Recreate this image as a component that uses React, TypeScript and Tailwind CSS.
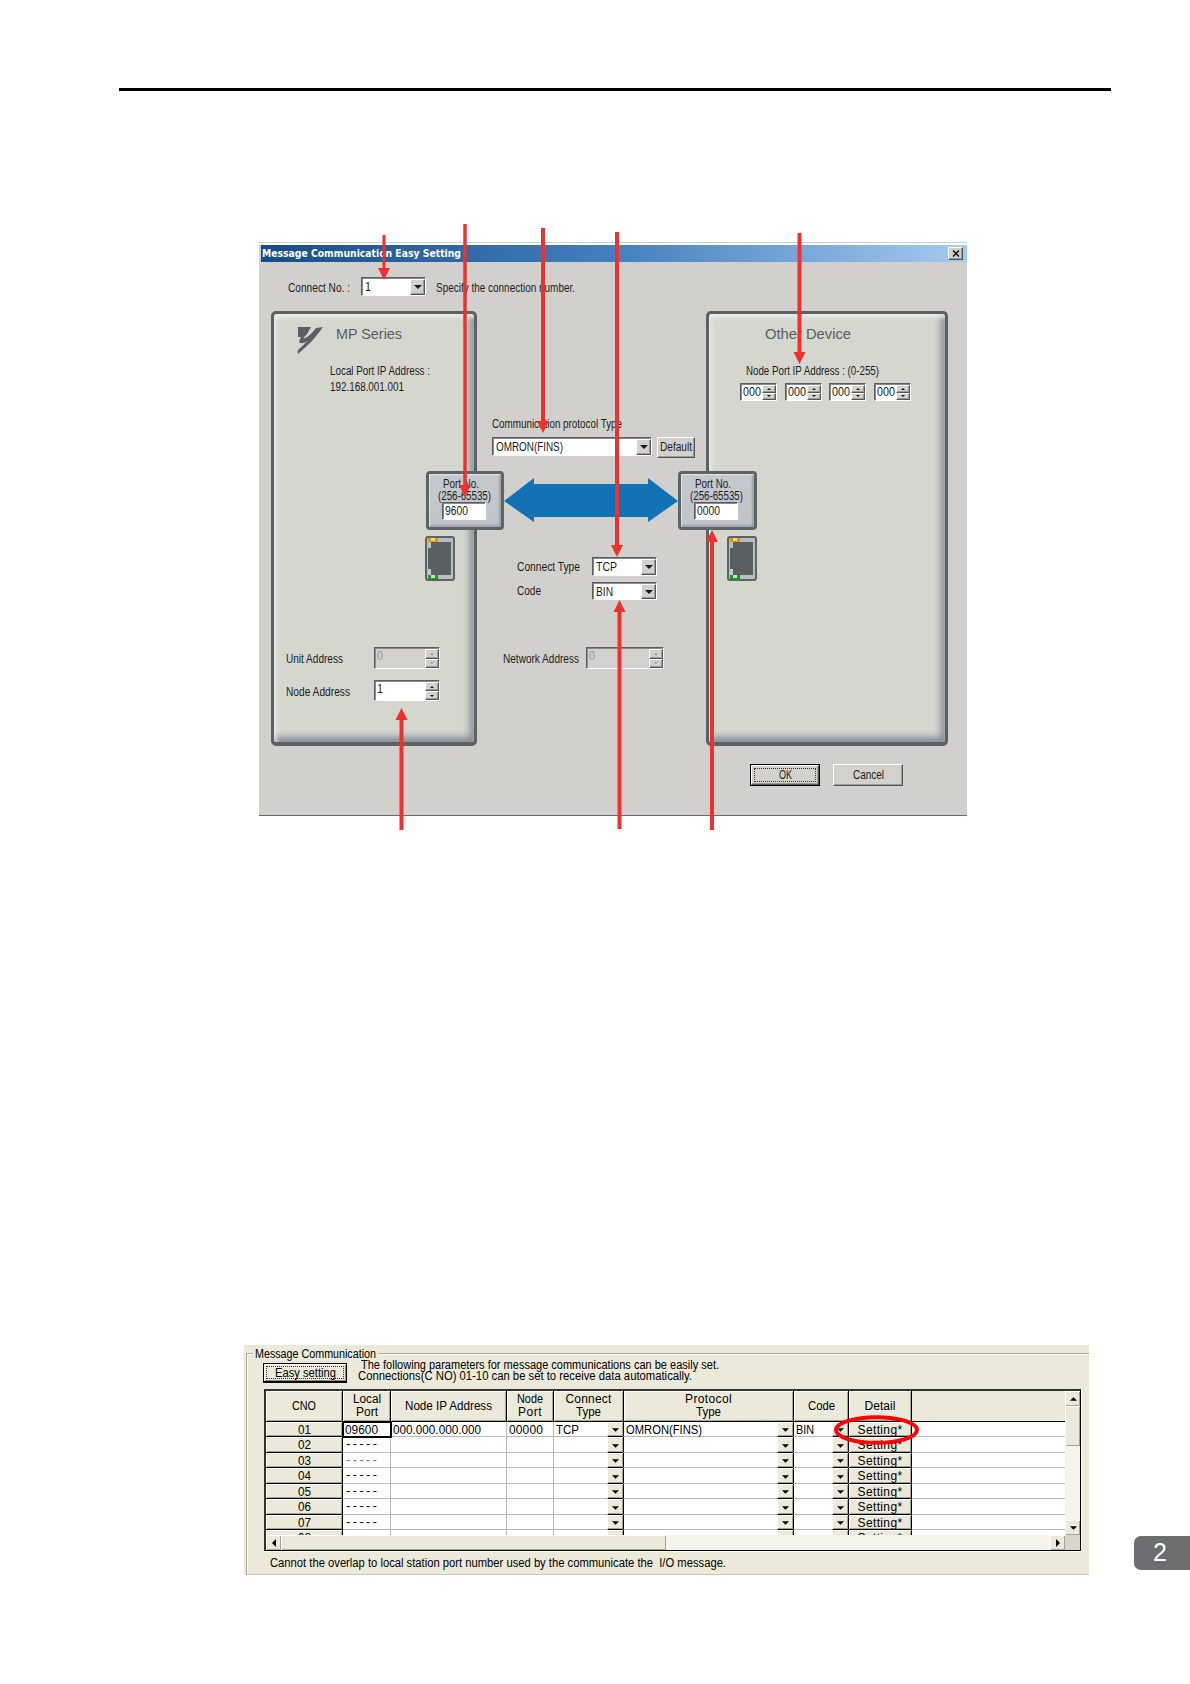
import React, { useLayoutEffect, useRef } from 'react';
import clsx from 'clsx';

const SUNKEN = 'border border-t-[#5c5c60] border-l-[#5c5c60] border-b-white border-r-white shadow-[inset_1px_1px_0_#8a8a8c]';
const RAISED = 'bg-[#d3d1cc] border border-t-white border-l-white border-b-[#55555a] border-r-[#55555a] shadow-[inset_-1px_-1px_0_#9b9b98]';
const XP_RAISED = 'bg-[#ebe9d9] border-t border-l border-t-white border-l-white shadow-[inset_-1px_-1px_0_#a5a394]';

// Makes the text fill the width given by className: wide text is condensed, narrow text is spaced out
function Fit({ children, className }: { children: string; className?: string }) {
  const ref = useRef<HTMLDivElement>(null);

  useLayoutEffect(() => {
    const box = ref.current;
    const text = box?.firstElementChild as HTMLElement | null;
    if (!box || !text) return;
    text.style.letterSpacing = '0px';
    text.style.transform = 'none';
    const width = text.getBoundingClientRect().width;
    if (width > box.clientWidth) {
      text.style.transform = `scaleX(${box.clientWidth / width})`;
    } else {
      text.style.letterSpacing = `${(box.clientWidth - width) / children.length}px`;
    }
  }, [children]);

  return (
    <div ref={ref} className={clsx('shrink-0 whitespace-pre', className)}>
      <span className="inline-block origin-left">{children}</span>
    </div>
  );
}

function Caret({ up, className }: { up?: boolean; className?: string }) {
  return (
    <svg viewBox="0 0 8 4" className={clsx('block', className)} fill="currentColor">
      <path d={up ? 'M0 4L4 0L8 4Z' : 'M0 0H8L4 4Z'} />
    </svg>
  );
}

function Combo({ value, className, textClass }: { value: string; className: string; textClass: string }) {
  return (
    <div className={clsx('flex shrink-0 justify-between bg-white pl-[3px] pt-px', SUNKEN, className)}>
      <Fit className={clsx('self-center leading-[14px]', textClass)}>{value}</Fit>
      <div className={clsx('flex w-[15px] items-center justify-center', RAISED)}>
        <Caret className="h-[4px] w-[8px]" />
      </div>
    </div>
  );
}

function Spinner({ value, className, textClass, disabled }: { value: string; className: string; textClass: string; disabled?: boolean }) {
  return (
    <div className={clsx('flex shrink-0 justify-between pl-[2px] pt-px', SUNKEN, disabled ? 'bg-[#d2d1ce] text-[#98989a]' : 'bg-white', className)}>
      <Fit className={clsx('leading-[15px]', textClass)}>{value}</Fit>
      <div className="flex w-[14px] flex-col">
        <div className={clsx('flex flex-1 items-center justify-center', RAISED)}>
          <Caret up className="h-[2px] w-[4px]" />
        </div>
        <div className={clsx('flex flex-1 items-center justify-center', RAISED)}>
          <Caret className="h-[2px] w-[4px]" />
        </div>
      </div>
    </div>
  );
}

function PortBox({ value, className }: { value: string; className: string }) {
  return (
    <div className={clsx('absolute h-[59px] rounded-[4px] border-[3px] border-[#5d6468] bg-linear-to-b from-[#c6c9cc] to-[#bfc4ca] shadow-[inset_1px_1px_1px_#e2e4e6,inset_-2px_-2px_2px_#9ba2ac]', className)}>
      <Fit className="ml-[14px] mt-[3px] h-[12px] w-[36px] text-[12px] leading-[14px]">Port No.</Fit>
      <Fit className="ml-[9px] h-[13px] w-[53px] text-[12px] leading-[14px]">(256-65535)</Fit>
      <div className={clsx('ml-[13px] h-[18px] w-[44px] bg-white pl-[2px]', SUNKEN)}>
        <Fit className="w-[23px] text-[12px] leading-[17px]">{value}</Fit>
      </div>
    </div>
  );
}

function Jack({ className }: { className: string }) {
  return (
    <svg viewBox="0 0 30 45" className={clsx('absolute h-[45px] w-[30px]', className)}>
      <rect x="1" y="1" width="28" height="43" rx="2" fill="#b9bdc0" stroke="#5d6468" strokeWidth="2" />
      <path d="M6 6H26V39H3V12H6Z" fill="#596062" />
      <rect x="3" y="33" width="3" height="6" fill="#c6c9cb" />
      <rect x="3" y="2" width="10" height="4" fill="#e2921f" />
      <rect x="6" y="2" width="4" height="3" fill="#ffe071" />
      <rect x="3" y="39" width="10" height="4" fill="#1e9139" />
      <rect x="6" y="39" width="4" height="3" fill="#a8ff9c" />
    </svg>
  );
}

const PANEL = 'relative h-[435px] shrink-0 rounded-[5px] border-[3px] border-b-[4px] border-[#5b6265] bg-[#d5d7cf] shadow-[inset_2px_3px_5px_#eceeea,inset_-5px_-6px_7px_-1px_#828b92]';

function EasySettingDialog() {
  return (
    <div className="relative ml-[259px] h-[574px] w-[708px] border-t border-b border-t-[#c9cdd1] border-b-[#6a6a6c] bg-[#d2d0cc] pt-[2px] text-[12px] text-[#1b1b1d]">
      <div className="absolute inset-x-0 top-0 h-[2px] bg-white" />
      <div className="ml-[2px] flex h-[17px] items-center justify-between bg-linear-to-r from-[#164d86] via-[#457fbd] to-[#a5cbef] pl-px pr-[4px]">
        <Fit className="w-[199px] font-[DejaVu_Sans,sans-serif] text-[10.5px] font-bold leading-[17px] text-white">Message Communication Easy Setting</Fit>
        <div className={clsx('flex h-[13px] w-[15px] items-center justify-center', RAISED)}>
          <svg viewBox="0 0 8 7" className="h-[7px] w-[8px]" stroke="#111" strokeWidth="1.5">
            <path d="M1 0.5L7 6.5M7 0.5L1 6.5" />
          </svg>
        </div>
      </div>

      <div className="ml-[29px] mt-[15px] flex h-[19px] items-center">
        <Fit className="w-[62px] pt-[2px]">Connect No. :</Fit>
        <Combo value="1" className="ml-[11px] h-[19px] w-[65px]" textClass="w-[6px]" />
        <Fit className="ml-[10px] w-[139px] pt-[2px]">Specify the connection number.</Fit>
      </div>

      <div className="ml-[12px] mt-[15px] flex">
        <div className={clsx('w-[206px]', PANEL)}>
          <div className="ml-[23px] mt-[13px] flex h-[27px]">
            <svg viewBox="0 0 26 27" className="h-[27px] w-[26px]" fill="#5a6065">
              <path d="M1 0H14L10 7L8 11Q13 9 19 1L26 0Q21 7 15 14Q9 20 1 27Q0 25 1 23Q7 18 10 14Q6 17 3 16Q1 15 4 10H1Z" />
              <path d="M16 2Q12 7 7 11" fill="none" stroke="#d5d7cf" strokeWidth="1.2" />
            </svg>
            <Fit className="ml-[13px] w-[66px] text-[15.5px] leading-[13px] text-[#595d60]">MP Series</Fit>
          </div>
          <Fit className="ml-[56px] mt-[10px] w-[100px] leading-[14px]">Local Port IP Address :</Fit>
          <Fit className="ml-[56px] mt-[2px] w-[74px] leading-[14px]">192.168.001.001</Fit>
          <div className="ml-[12px] mt-[253px] flex h-[22px] items-center">
            <Fit className="w-[57px] pt-px">Unit Address</Fit>
            <Spinner disabled value="0" className="ml-[31px] h-[22px] w-[66px]" textClass="w-[6px]" />
          </div>
          <div className="ml-[12px] mt-[11px] flex h-[21px] items-center">
            <Fit className="w-[64px] pt-[2px]">Node Address</Fit>
            <Spinner value="1" className="ml-[24px] h-[21px] w-[66px]" textClass="w-[6px]" />
          </div>
          <PortBox value="9600" className="left-[152px] top-[157px] w-[78px]" />
          <Jack className="left-[151px] top-[222px]" />
        </div>

        <div className="w-[229px] shrink-0">
          <Fit className="ml-[15px] mt-[106px] w-[130px] leading-[15px]">Communication protocol Type</Fit>
          <div className="ml-[15px] mt-[5px] flex h-[20px] items-start">
            <Combo value="OMRON(FINS)" className="h-[19px] w-[160px]" textClass="w-[67px]" />
            <div className={clsx('ml-[5px] h-[21px] w-[38px] pl-[2px]', RAISED)}>
              <Fit className="w-[32px] leading-[18px]">Default</Fit>
            </div>
          </div>
          <svg viewBox="0 0 174 44" className="ml-[27px] mt-[21px] h-[44px] w-[174px]" fill="#1172b5">
            <path d="M0 23L30 0V6H144V0L174 23L144 44V39H30V44Z" />
          </svg>
          <div className="ml-[40px] mt-[35px] flex h-[19px] items-center">
            <Fit className="w-[63px]">Connect Type</Fit>
            <Combo value="TCP" className="ml-[12px] h-[19px] w-[65px]" textClass="w-[21px]" />
          </div>
          <div className="ml-[40px] mt-[6px] flex h-[18px] items-center">
            <Fit className="w-[24px]">Code</Fit>
            <Combo value="BIN" className="ml-[51px] h-[18px] w-[65px]" textClass="w-[17px]" />
          </div>
          <div className="ml-[26px] mt-[47px] flex h-[22px] items-center">
            <Fit className="w-[76px] pt-px">Network Address</Fit>
            <Spinner disabled value="0" className="ml-[7px] h-[22px] w-[78px]" textClass="w-[6px]" />
          </div>
        </div>

        <div className={clsx('w-[242px]', PANEL)}>
          <Fit className="ml-[56px] mt-[13px] h-[14px] w-[86px] text-[15.5px] leading-[13px] text-[#595d60]">Other Device</Fit>
          <Fit className="ml-[37px] mt-[23px] w-[133px] leading-[14px]">Node Port IP Address : (0-255)</Fit>
          <div className="ml-[31px] mt-[5px] flex gap-[7.5px]">
            {[0, 1, 2, 3].map((n) => (
              <Spinner key={n} value="000" className="h-[18px] w-[37px]" textClass="w-[18px]" />
            ))}
          </div>
          <PortBox value="0000" className="-left-[31px] top-[157px] w-[79px]" />
          <Jack className="left-[18px] top-[222px]" />
        </div>
      </div>

      <div className="ml-[491px] mt-[18px] flex gap-[13px]">
        <div className="h-[22px] w-[70px] border border-black">
          <div className={clsx('h-full p-[2px]', RAISED)}>
            <div className="flex h-full items-center justify-center border border-dotted border-[#333]">
              <Fit className="w-[13px]">OK</Fit>
            </div>
          </div>
        </div>
        <div className={clsx('flex h-[22px] w-[70px] items-center justify-center', RAISED)}>
          <Fit className="w-[31px]">Cancel</Fit>
        </div>
      </div>
    </div>
  );
}

const ARROWS = [
  { x: 384, from: 235, to: 280, w: 3 },
  { x: 465, from: 224, to: 497, w: 3.5 },
  { x: 543, from: 228, to: 433, w: 4 },
  { x: 617, from: 232, to: 557, w: 4 },
  { x: 799.5, from: 233, to: 364, w: 4 },
  { x: 401.5, from: 830, to: 708, w: 4 },
  { x: 619.5, from: 829, to: 600, w: 4 },
  { x: 712, from: 830, to: 530, w: 4 },
];

function Arrows() {
  return (
    <svg viewBox="0 0 1190 900" className="absolute left-0 top-0 h-[900px] w-[1190px]" fill="#ee312c" stroke="#ee312c">
      {ARROWS.map(({ x, from, to, w }) => {
        const base = to > from ? to - 12 : to + 12;
        return (
          <g key={x}>
            <line x1={x} y1={from} x2={x} y2={base} strokeWidth={w} />
            <path d={`M${x - 6} ${base}H${x + 6}L${x} ${to}Z`} stroke="none" />
          </g>
        );
      })}
    </svg>
  );
}

const GRID = 'grid grid-rows-[100%] grid-cols-[77px_48px_116px_47px_70px_170px_55px_63px_153px]';
const HEAD = 'flex flex-col items-center justify-center bg-[#ebe9d9] border-r border-b border-black shadow-[inset_1px_1px_0_#fff,inset_-1px_-1px_0_#a5a394] leading-[13px]';
const CELL = 'flex min-w-0 border-r border-b border-[#b9b9b9] leading-[16px]';
const BUTTON_CELL = 'flex min-h-0 justify-center border-b border-r border-black bg-[#ebe9d9] leading-[17px] shadow-[inset_1px_1px_0_#fff,inset_-1px_-1px_0_#a5a394]';

function DropCell({ value, textClass }: { value?: string; textClass?: string }) {
  return (
    <div className="flex min-h-0 min-w-0 justify-between border-b border-r border-b-[#b9b9b9] border-r-black pl-[2px]">
      {value ? <Fit className={clsx('leading-[16px]', textClass)}>{value}</Fit> : <span />}
      <div className={clsx('-mb-px flex w-[16px] items-center justify-center border-b border-b-black', XP_RAISED)}>
        <Caret className="mt-px h-[4px] w-[7px]" />
      </div>
    </div>
  );
}

function Row({ no, height }: { no: string; height: string }) {
  const first = no === '01';
  return (
    <div className={clsx(GRID, height)}>
      <div className={BUTTON_CELL}>
        <Fit className="w-[13px]">{no}</Fit>
      </div>
      <div className={clsx(CELL, 'pl-[2px]', first && 'relative outline-2 -outline-offset-1 outline-black', no === '03' && 'text-[#777]')}>
        {first ? <Fit className="w-[33px]">09600</Fit> : <Fit className="w-[33px] font-[Liberation_Mono,monospace] text-[13px]">-----</Fit>}
      </div>
      <div className={clsx(CELL, 'pl-[2px]')}>{first && <Fit className="w-[88px]">000.000.000.000</Fit>}</div>
      <div className={clsx(CELL, 'pl-[2px]')}>{first && <Fit className="w-[34px]">00000</Fit>}</div>
      <DropCell value={first ? 'TCP' : undefined} textClass="w-[23px]" />
      <DropCell value={first ? 'OMRON(FINS)' : undefined} textClass="w-[76px]" />
      <DropCell value={first ? 'BIN' : undefined} textClass="w-[18px]" />
      <div className={BUTTON_CELL}>
        <Fit className="w-[45px]">Setting*</Fit>
      </div>
      <div className="border-b border-[#b9b9b9]" />
    </div>
  );
}

const ROWS = [
  { no: '01', height: 'h-[15px]' },
  { no: '02', height: 'h-[16px]' },
  { no: '03', height: 'h-[15px]' },
  { no: '04', height: 'h-[16px]' },
  { no: '05', height: 'h-[15px]' },
  { no: '06', height: 'h-[16px]' },
  { no: '07', height: 'h-[15px]' },
  { no: '08', height: 'h-[16px]' },
];

function ConnectionTable() {
  return (
    <div className="ml-[20px] flex h-[162px] w-[817px] border-t-2 border-l-2 border-b border-r border-t-[#33332f] border-l-[#33332f] border-b-black border-r-black bg-white shadow-[1px_1px_0_#fff]">
      <div className="flex w-[799px] shrink-0 flex-col">
        <div className="h-[144px] overflow-hidden">
          <div className={clsx(GRID, 'h-[31px]')}>
            <div className={HEAD}><Fit className="w-[24px]">CNO</Fit></div>
            <div className={HEAD}><Fit className="w-[28px]">Local</Fit><Fit className="w-[22px]">Port</Fit></div>
            <div className={HEAD}><Fit className="w-[87px]">Node IP Address</Fit></div>
            <div className={HEAD}><Fit className="w-[26px]">Node</Fit><Fit className="w-[24px]">Port</Fit></div>
            <div className={HEAD}><Fit className="w-[46px]">Connect</Fit><Fit className="w-[25px]">Type</Fit></div>
            <div className={HEAD}><Fit className="w-[47px]">Protocol</Fit><Fit className="w-[25px]">Type</Fit></div>
            <div className={HEAD}><Fit className="w-[27px]">Code</Fit></div>
            <div className={HEAD}><Fit className="w-[31px]">Detail</Fit></div>
            <div className="border-b border-black bg-[#ebe9d9]" />
          </div>
          {ROWS.map((row) => <Row key={row.no} {...row} />)}
        </div>
        <div className="flex h-[15px] bg-[#f4f3ec]">
          <div className={clsx('flex w-[15px] items-center justify-center', XP_RAISED)}>
            <Caret className="h-[4px] w-[8px] rotate-90" />
          </div>
          <div className={clsx('w-[385px]', XP_RAISED)} />
          <div className={clsx('ml-auto flex w-[15px] items-center justify-center', XP_RAISED)}>
            <Caret className="h-[4px] w-[8px] -rotate-90" />
          </div>
        </div>
      </div>
      <div className="flex flex-1 flex-col bg-[#f4f3ec]">
        <div className={clsx('flex h-[15px] items-center justify-center', XP_RAISED)}><Caret up className="h-[4px] w-[7px]" /></div>
        <div className={clsx('h-[40px]', XP_RAISED)} />
        <div className={clsx('mt-auto flex h-[15px] items-center justify-center', XP_RAISED)}><Caret className="h-[4px] w-[7px]" /></div>
        <div className="h-[15px] bg-[#d8d6cb]" />
      </div>
    </div>
  );
}

function MessageCommunication() {
  return (
    <div className="relative ml-[244px] mt-[529px] h-[230px] w-[845px] bg-[#ebe9d9] text-[12px] text-black">
      <div className="absolute bottom-0 left-[2px] right-0 top-[8px] border-b border-l border-t border-b-[#c9c8be] border-l-[#aaa899] border-t-[#aaa899] shadow-[inset_1px_1px_0_#fff]" />
      <div className="relative h-[18px] pl-[9px]">
        <div className="inline-block bg-[#ebe9d9] px-[2px]">
          <Fit className="w-[121px] leading-[15px]">Message Communication</Fit>
        </div>
      </div>
      <div className="relative flex h-[26px] pl-[19px]">
        <div className="h-[20px] w-[84px] border border-b-2 border-black bg-[#ebe9d9] p-[2px] shadow-[inset_1px_1px_0_#fff,inset_-1px_-1px_0_#8d8b7d]">
          <div className="flex h-full items-center justify-center border border-dotted border-[#333]">
            <Fit className="w-[61px]">Easy setting</Fit>
          </div>
        </div>
        <div className="-mt-[3px] ml-[11px] leading-[11px]">
          <Fit className="ml-[3px] w-[358px]">The following parameters for message communications can be easily set.</Fit>
          <Fit className="w-[334px]">Connections(C NO) 01-10 can be set to receive data automatically.</Fit>
        </div>
      </div>
      <div className="relative">
        <ConnectionTable />
        <svg viewBox="0 0 86 30" className="absolute left-[590px] top-[26px] h-[30px] w-[86px]">
          <ellipse cx="42.5" cy="15" rx="40.5" ry="12.8" fill="none" stroke="#f80606" strokeWidth="4" />
        </svg>
      </div>
      <Fit className="relative ml-[26px] mt-[5px] w-[456px] leading-[15px]">Cannot the overlap to local station port number used by the communicate the  I/O message.</Fit>
    </div>
  );
}

export default function App() {
  return (
    <div className="relative h-[1684px] w-[1190px] overflow-hidden bg-white font-[Liberation_Sans,Arial,sans-serif]">
      <div className="ml-[119px] mt-[88px] h-[3px] w-[992px] bg-black" />
      <div className="h-[151px]" />
      <EasySettingDialog />
      <Arrows />
      <MessageCommunication />
      <div className="absolute right-0 top-[1536px] flex h-[34px] w-[56px] items-center rounded-l-[7px] bg-[#6d6e70] pl-[19px] text-[25px] text-white">2</div>
    </div>
  );
}
